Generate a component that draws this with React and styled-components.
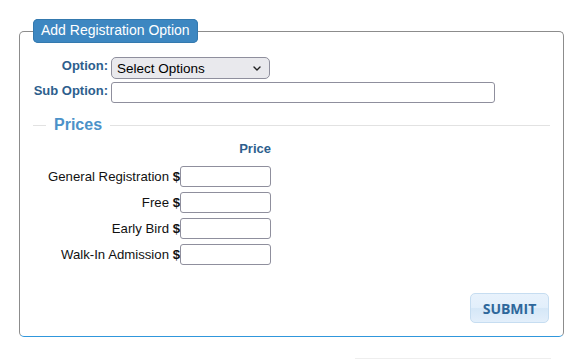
import styled, { createGlobalStyle } from 'styled-components'

const GlobalStyle = createGlobalStyle`
  body {
    margin: 0;
    background: #fff;
    font-family: 'Liberation Sans', Arial, sans-serif;
  }
`

const Page = styled.div`
  width: 582px;
  height: 360px;
  padding: 19px 0 0 19px;
  box-sizing: border-box;
  position: relative;
`

const Panel = styled.fieldset`
  width: 545px;
  box-sizing: border-box;
  margin: 0;
  padding: 14px 13px 13px 13px;
  border: 1px solid #8c8c8c;
  border-bottom-color: #3097dc;
  border-radius: 5px;
`

const PanelLegend = styled.legend`
  margin-left: 0;
  padding: 3px 8px 4px;
  background: #3d87c1;
  color: #fff;
  font-size: 14px;
  line-height: 17px;
  border-radius: 5px;
  box-shadow: inset 0 0 0 1px #3479ae;
`

const FieldGrid = styled.div`
  display: grid;
  grid-template-columns: 75px 1fr;
  column-gap: 3px;
  row-gap: 3px;
  align-items: center;
`

const FieldLabel = styled.label`
  text-align: right;
  font-size: 13px;
  font-weight: bold;
  color: #2d5e8d;
  align-self: start;
  padding-top: 1px;
`

const SelectWrap = styled.div`
  position: relative;
  width: 159px;
`

const Select = styled.select`
  appearance: none;
  width: 159px;
  height: 22px;
  font-family: 'Liberation Sans', Arial, sans-serif;
  font-size: 13.5px;
  color: #000;
  background: #e9e9ed;
  border: 1px solid #8f8f9d;
  border-radius: 5px;
  padding: 0 5px;
  margin: 0;
  display: block;
`

const Chevron = styled.svg`
  position: absolute;
  right: 9px;
  top: 9px;
  pointer-events: none;
`

const TextInput = styled.input`
  width: ${p => p.$w}px;
  height: 21px;
  box-sizing: border-box;
  border: 1px solid #8f8f9d;
  border-radius: 3px;
  padding: 0 4px;
  font-family: 'Liberation Sans', Arial, sans-serif;
  font-size: 13px;
  background: #fff;
  margin: 0;
  display: block;
`

const Prices = styled.fieldset`
  margin: 13px 0 0;
  padding: 0;
  border: none;
  border-top: 1px solid #e2e2e2;
`

const PricesLegend = styled.legend`
  margin-left: 13px;
  padding: 0 8px;
  font-size: 16px;
  font-weight: bold;
  color: #4c92c9;
  line-height: 18px;
`

const PriceGrid = styled.div`
  display: grid;
  grid-template-columns: 147px 91px;
  row-gap: 4px;
  margin-top: 7px;
`

const PriceHead = styled.div`
  grid-column: 2;
  text-align: right;
  font-size: 13px;
  font-weight: bold;
  color: #2d5e8d;
  margin-bottom: 6px;
`

const PriceLabel = styled.div`
  text-align: right;
  font-size: 13.2px;
  color: #111;
  line-height: 22px;

  b {
    font-weight: bold;
  }
`

const Footer = styled.div`
  display: flex;
  justify-content: flex-end;
  margin-top: 27px;
`

const SubmitButton = styled.button`
  width: 79px;
  height: 30px;
  margin-right: 1px;
  border: 1px solid #c6ddf1;
  border-radius: 5px;
  background: linear-gradient(#e8f2fc 0%, #e2effb 48%, #d5e7f7 52%, #e3effb 100%);
  color: #2e679b;
  font-family: 'Open Sans', 'Liberation Sans', sans-serif;
  font-size: 14px;
  font-weight: bold;
  cursor: pointer;
`

const Rule = styled.div`
  position: absolute;
  left: 355px;
  top: 358px;
  width: 196px;
  height: 1px;
  background: #eeeeee;
`

const rows = ['General Registration', 'Free', 'Early Bird', 'Walk-In Admission']

const App = () => {
  return (
    <Page>
      <GlobalStyle />
      <Panel>
        <PanelLegend>Add Registration Option</PanelLegend>
        <FieldGrid>
          <FieldLabel>Option:</FieldLabel>
          <SelectWrap>
            <Select defaultValue="">
              <option value="">Select Options</option>
            </Select>
            <Chevron width="8" height="5" viewBox="0 0 8 5">
              <path d="M1 1l3 3 3-3" fill="none" stroke="#222" strokeWidth="1.4" strokeLinecap="round" strokeLinejoin="round" />
            </Chevron>
          </SelectWrap>
          <FieldLabel>Sub Option:</FieldLabel>
          <div>
            <TextInput $w={384} />
          </div>
        </FieldGrid>

        <Prices>
          <PricesLegend>Prices</PricesLegend>
          <PriceGrid>
            <PriceHead>Price</PriceHead>
            {rows.map(r => (
              <>
                <PriceLabel key={r}>{r} <b>$</b></PriceLabel>
                <TextInput key={r + '-in'} $w={91} />
              </>
            ))}
          </PriceGrid>
        </Prices>

        <Footer>
          <SubmitButton>SUBMIT</SubmitButton>
        </Footer>
      </Panel>
      <Rule />
    </Page>
  )
}

export default App
